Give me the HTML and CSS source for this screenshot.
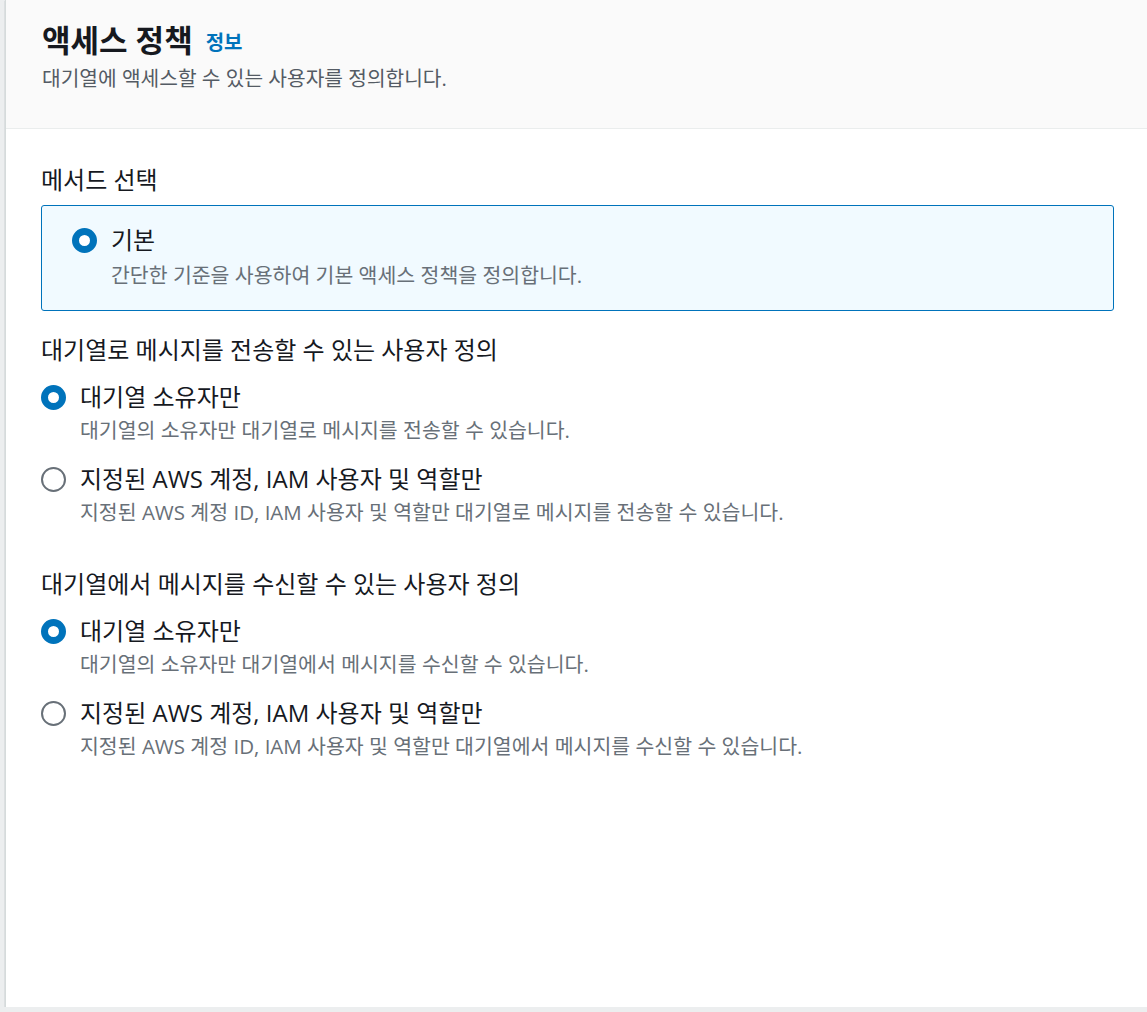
FILE: index.html
```html
<!DOCTYPE html>
<html lang="ko">
<head>
<meta charset="utf-8">
<title>액세스 정책</title>
<link rel="stylesheet" href="styles.css">
</head>
<body>
<div class="container">
  <div class="header">
    <h2 class="title">액세스 정책 <a class="info" href="#">정보</a></h2>
    <p class="subtitle">대기열에 액세스할 수 있는 사용자를 정의합니다.</p>
  </div>
  <div class="content">
    <div class="field">
      <div class="field-label">메서드 선택</div>
      <div class="tile">
        <div class="radio-row">
          <span class="radio checked"></span>
          <div class="radio-text">
            <div class="radio-label">기본</div>
            <div class="radio-desc tile-desc">간단한 기준을 사용하여 기본 액세스 정책을 정의합니다.</div>
          </div>
        </div>
      </div>
    </div>

    <div class="field field-send">
      <div class="field-label">대기열로 메시지를 전송할 수 있는 사용자 정의</div>
      <div class="radio-group">
        <div class="radio-row">
          <span class="radio checked"></span>
          <div class="radio-text">
            <div class="radio-label">대기열 소유자만</div>
            <div class="radio-desc">대기열의 소유자만 대기열로 메시지를 전송할 수 있습니다.</div>
          </div>
        </div>
        <div class="radio-row">
          <span class="radio"></span>
          <div class="radio-text">
            <div class="radio-label">지정된 AWS 계정, IAM 사용자 및 역할만</div>
            <div class="radio-desc">지정된 AWS 계정 ID, IAM 사용자 및 역할만 대기열로 메시지를 전송할 수 있습니다.</div>
          </div>
        </div>
      </div>
    </div>

    <div class="field field-receive">
      <div class="field-label">대기열에서 메시지를 수신할 수 있는 사용자 정의</div>
      <div class="radio-group">
        <div class="radio-row">
          <span class="radio checked"></span>
          <div class="radio-text">
            <div class="radio-label">대기열 소유자만</div>
            <div class="radio-desc">대기열의 소유자만 대기열에서 메시지를 수신할 수 있습니다.</div>
          </div>
        </div>
        <div class="radio-row">
          <span class="radio"></span>
          <div class="radio-text">
            <div class="radio-label">지정된 AWS 계정, IAM 사용자 및 역할만</div>
            <div class="radio-desc">지정된 AWS 계정 ID, IAM 사용자 및 역할만 대기열에서 메시지를 수신할 수 있습니다.</div>
          </div>
        </div>
      </div>
    </div>
  </div>
</div>
</body>
</html>
```
FILE: styles.css
```css
html, body {
  margin: 0;
  padding: 0;
}
body {
  background: #eceeef;
  font-family: "Open Sans", "Noto Sans CJK KR", sans-serif;
  color: #16191f;
  overflow: hidden;
}
.container {
  margin-left: 5px;
  width: 1160px;
  height: 1007px;
  background: #ffffff;
  border-left: 1px solid #d5dbdb;
  box-shadow: 0 1px 1px 0 rgba(0, 28, 36, 0.4);
  box-sizing: border-box;
}
.header {
  background: #fafafa;
  border-bottom: 1px solid #eaeded;
  height: 129px;
  box-sizing: border-box;
  padding: 20px 0 0 36px;
}
.title {
  margin: 0;
  font-size: 31px;
  line-height: 40px;
  font-weight: 700;
  color: #16191f;
}
.info {
  font-size: 20px;
  font-weight: 700;
  color: #0073bb;
  text-decoration: none;
  margin-left: 5px;
  vertical-align: 2px;
}
.subtitle {
  margin: 1px 0 0;
  font-size: 20.3px;
  line-height: 28px;
  color: #545b64;
}
.content {
  padding: 34px 0 0 35px;
  width: 1073px;
}
.field-label {
  font-size: 24px;
  line-height: 34px;
  color: #16191f;
}
.tile {
  margin-top: 8px;
  border: 1px solid #0073bb;
  border-radius: 3px;
  background: #f1faff;
  height: 106px;
  box-sizing: border-box;
  padding: 17px 30px;
}
.field-send {
  margin-top: 22px;
}
.field-receive {
  margin-top: 39px;
}
.radio-group {
  display: flex;
  flex-direction: column;
  gap: 16px;
  margin-top: 13px;
}
.radio-row {
  display: flex;
  align-items: flex-start;
  gap: 14px;
}
.radio {
  flex: none;
  width: 25px;
  height: 25px;
  margin-top: 5px;
  border-radius: 50%;
  border: 2px solid #687078;
  box-sizing: border-box;
  background: #ffffff;
}
.radio.checked {
  border: 7px solid #0073bb;
}
.radio-label {
  font-size: 24px;
  line-height: 34px;
  color: #16191f;
}
.radio-desc {
  font-size: 20.5px;
  line-height: 32px;
  color: #687078;
}
.tile-desc {
  margin-top: 2px;
}
```
